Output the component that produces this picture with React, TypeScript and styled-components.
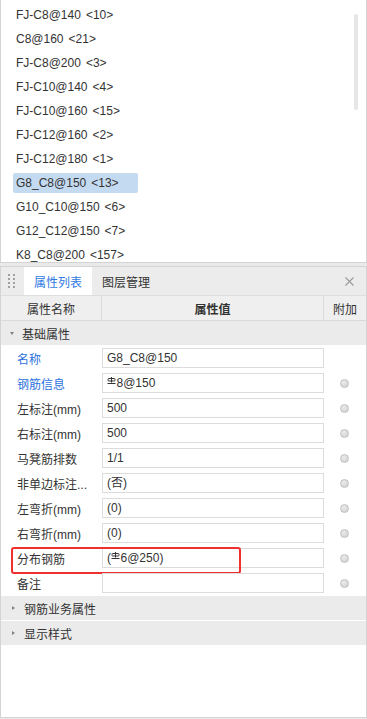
import React from 'react';
import styled, { createGlobalStyle } from 'styled-components';

const GlobalStyle = createGlobalStyle`
  html, body {
    margin: 0;
    padding: 0;
    background: #e9e9e9;
  }
  body {
    font-family: "Liberation Sans", "Noto Sans CJK SC", sans-serif;
    font-size: 12px;
    color: #333;
  }
`;

type RebarItem = { name: string; count: number };

const items: RebarItem[] = [
    { name: 'FJ-C8@140', count: 10 },
    { name: 'C8@160', count: 21 },
    { name: 'FJ-C8@200', count: 3 },
    { name: 'FJ-C10@140', count: 4 },
    { name: 'FJ-C10@160', count: 15 },
    { name: 'FJ-C12@160', count: 2 },
    { name: 'FJ-C12@180', count: 1 },
    { name: 'G8_C8@150', count: 13 },
    { name: 'G10_C10@150', count: 6 },
    { name: 'G12_C12@150', count: 7 },
    { name: 'K8_C8@200', count: 157 },
];

type PropRow = {
    label: string
    value: string
    blue?: boolean
    rebar?: boolean
    paren?: boolean
    dot?: boolean
    marked?: boolean
};

const rows: PropRow[] = [
    { label: '名称', value: 'G8_C8@150', blue: true },
    { label: '钢筋信息', value: '8@150', blue: true, rebar: true, dot: true },
    { label: '左标注(mm)', value: '500', dot: true },
    { label: '右标注(mm)', value: '500', dot: true },
    { label: '马凳筋排数', value: '1/1', dot: true },
    { label: '非单边标注...', value: '(否)', dot: true },
    { label: '左弯折(mm)', value: '(0)', dot: true },
    { label: '右弯折(mm)', value: '(0)', dot: true },
    { label: '分布钢筋', value: '6@250', rebar: true, paren: true, dot: true, marked: true },
    { label: '备注', value: '', dot: true },
];

const RebarSymbol = () => (
    <SymbolSvg width="9" height="7" viewBox="0 0 9 7">
        <path d="M4.5 0 V5.5" stroke="#333" strokeWidth="1" fill="none" />
        <rect x="1" y="1.5" width="7" height="2.5" rx="0.8" stroke="#333" strokeWidth="1" fill="none" />
        <path d="M0.5 6.5 H8.5" stroke="#333" strokeWidth="1" fill="none" />
    </SymbolSvg>
);

const Grip = () => (
    <GripSvg width="7" height="15" viewBox="0 0 7 15">
        {[0, 4, 8, 12].map(y => (
            <React.Fragment key={y}>
                <rect x="0" y={y} width="2" height="2" fill="#a0a0a0" />
                <rect x="5" y={y} width="2" height="2" fill="#a0a0a0" />
            </React.Fragment>
        ))}
    </GripSvg>
);

export default function App() {
    return (
        <Page>
            <GlobalStyle />
            <ListPanel>
                <ListBody>
                    {items.map(it => (
                        <ListItem key={it.name} selected={it.name === 'G8_C8@150'}>
                            {it.name}<Count>{'<'}{it.count}{'>'}</Count>
                        </ListItem>
                    ))}
                </ListBody>
                <ScrollTrack>
                    <ScrollThumb />
                </ScrollTrack>
            </ListPanel>

            <PropertyPanel>
                <TabBar>
                    <GripArea><Grip /></GripArea>
                    <Tab active>属性列表</Tab>
                    <Tab>图层管理</Tab>
                    <CloseButton>
                        <svg width="9" height="9" viewBox="0 0 9 9">
                            <path d="M0.5 0.5 L8.5 8.5 M8.5 0.5 L0.5 8.5" stroke="#9a9a9a" strokeWidth="1.1" />
                        </svg>
                    </CloseButton>
                </TabBar>

                <HeaderRow>
                    <HeaderCell>属性名称</HeaderCell>
                    <HeaderCell bold>属性值</HeaderCell>
                    <HeaderCell last>附加</HeaderCell>
                </HeaderRow>

                <GroupRow>
                    <Caret open />
                    基础属性
                </GroupRow>

                {rows.map(r => (
                    <Row key={r.label}>
                        <Label blue={r.blue}>{r.label}</Label>
                        <ValueCell>
                            <ValueBox>
                                {r.paren && '('}
                                {r.rebar && <RebarSymbol />}
                                {r.value}
                                {r.paren && ')'}
                            </ValueBox>
                        </ValueCell>
                        <ExtraCell>{r.dot && <Dot />}</ExtraCell>
                        {r.marked && <Marker />}
                    </Row>
                ))}

                <GroupRow>
                    <Caret />
                    钢筋业务属性
                </GroupRow>
                <GroupRow>
                    <Caret />
                    显示样式
                </GroupRow>
            </PropertyPanel>
        </Page>
    );
}

const Page = styled.div`
    width: 367px;
    height: 718px;
    display: flex;
    flex-direction: column;
`

const ListPanel = styled.div`
    height: 263px;
    box-sizing: border-box;
    background: #fff;
    border: 1px solid #d4d4d4;
    border-top: none;
    display: flex;
    overflow: hidden;
`

const ListBody = styled.div`
    flex: 1;
    padding-top: 3px;
    display: flex;
    flex-direction: column;
`

const ListItem = styled.div<{ selected?: boolean }>`
    flex: none;
    width: 125px;
    height: 20px;
    line-height: 20px;
    margin: 2px 0 2px 12px;
    padding-left: 3px;
    box-sizing: border-box;
    border-radius: 2px;
    white-space: nowrap;
    color: #333;
    background: ${p => (p.selected ? '#c4daf1' : 'transparent')};
`

const Count = styled.span`
    margin-left: 5px;
`

const ScrollTrack = styled.div`
    width: 12px;
    padding-top: 14px;
`

const ScrollThumb = styled.div`
    width: 4px;
    height: 96px;
    border-radius: 2px;
    background: #e6e6e6;
`

const PropertyPanel = styled.div`
    flex: 1;
    margin-top: 3px;
    background: #fff;
    border: 1px solid #d4d4d4;
    display: flex;
    flex-direction: column;
`

const TabBar = styled.div`
    height: 28px;
    background: #ececec;
    border-bottom: 1px solid #dedede;
    display: flex;
    align-items: stretch;
`

const GripArea = styled.div`
    width: 23px;
    display: flex;
    align-items: center;
    padding-left: 7px;
    box-sizing: border-box;
`

const GripSvg = styled.svg`
    display: block;
`

const Tab = styled.div<{ active?: boolean }>`
    width: 68px;
    display: flex;
    align-items: center;
    justify-content: center;
    font-size: 12px;
    color: ${p => (p.active ? '#2f7ae5' : '#333')};
    background: ${p => (p.active ? '#fff' : 'transparent')};
`

const CloseButton = styled.div`
    margin-left: auto;
    width: 28px;
    display: flex;
    align-items: center;
    justify-content: center;
    padding-right: 3px;
    svg { display: block; }
`

const HeaderRow = styled.div`
    height: 24px;
    background: #efefef;
    border-bottom: 1px solid #dadada;
    display: grid;
    grid-template-columns: 101px 222px 1fr;
`

const HeaderCell = styled.div<{ bold?: boolean; last?: boolean }>`
    display: flex;
    align-items: center;
    justify-content: center;
    font-weight: ${p => (p.bold ? 700 : 400)};
    border-right: ${p => (p.last ? 'none' : '1px solid #dadada')};
`

const GroupRow = styled.div`
    height: 24px;
    border-bottom: 1px solid #fff;
    background: #ebebeb;
    display: flex;
    align-items: center;
    padding-left: 9px;
    color: #333;
`

const Caret = styled.span<{ open?: boolean }>`
    width: 0;
    height: 0;
    margin-right: ${p => (p.open ? '8px' : '9px')};
    border-style: solid;
    border-color: transparent;
    ${p => p.open
        ? 'border-width: 3px 2.5px 0 2.5px; border-top-color: #808080;'
        : 'border-width: 2.5px 0 2.5px 3px; border-left-color: #808080; margin-left: 2px;'}
`

const Row = styled.div`
    position: relative;
    height: 25px;
    display: grid;
    grid-template-columns: 101px 222px 1fr;
`

const Label = styled.div<{ blue?: boolean }>`
    padding-left: 16px;
    display: flex;
    align-items: center;
    white-space: nowrap;
    color: ${p => (p.blue ? '#2d72e0' : '#333')};
`

const ValueCell = styled.div`
    padding-top: 2px;
`

const ValueBox = styled.div`
    height: 20px;
    box-sizing: border-box;
    border: 1px solid #dcdcdc;
    padding-left: 4px;
    line-height: 18px;
    white-space: nowrap;
    color: #333;
`

const SymbolSvg = styled.svg`
    vertical-align: 3px;
    margin-right: 0.5px;
`

const ExtraCell = styled.div`
    display: flex;
    align-items: center;
    padding-left: 16px;
`

const Dot = styled.span`
    width: 9px;
    height: 9px;
    border-radius: 50%;
    box-sizing: border-box;
    border: 1px solid #c2c2c2;
    background: radial-gradient(circle at 40% 35%, #ececec, #cbcbcb);
`

const Marker = styled.div`
    position: absolute;
    left: 10px;
    top: 1px;
    width: 230px;
    height: 27px;
    box-sizing: border-box;
    border: 2px solid #f0302e;
    border-radius: 3px;
    pointer-events: none;
`
